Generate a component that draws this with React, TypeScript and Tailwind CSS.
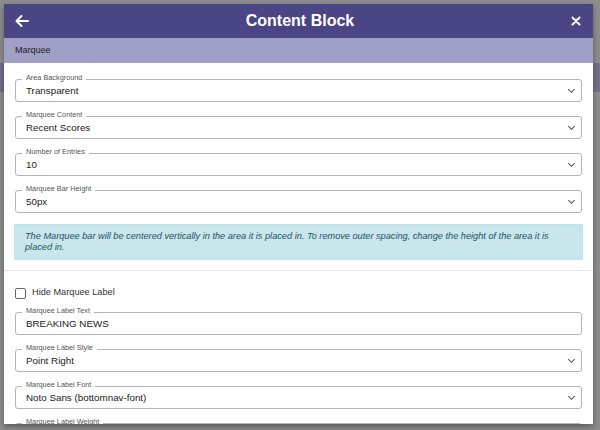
import React from "react";

type FieldProps = {
  label: string;
  value: string;
  select?: boolean;
};

const Chevron = () => (
  <svg width="9" height="9" viewBox="0 0 10 10" className="text-gray-600">
    <path d="M1.5 3.5 L5 7 L8.5 3.5" fill="none" stroke="currentColor" strokeWidth="1.2" />
  </svg>
);

const Field: React.FC<FieldProps> = ({ label, value, select = true }) => (
  <div className="relative shrink-0 h-[23px] border border-[#b5b5b5] rounded-[3px] bg-white flex items-center pl-[10px] pr-[5px]">
    <span className="absolute -top-[7px] left-[6px] px-[4px] bg-white text-[7.3px] leading-[10px] text-[#555]">
      {label}
    </span>
    <span className="flex-1 text-[9.8px] text-[#222] pt-[2px]">{value}</span>
    {select && <Chevron />}
  </div>
);

const App: React.FC = () => {
  return (
    <div
      className="w-[600px] h-[430px] bg-[linear-gradient(to_bottom,#8d8d8d_63px,#726f8c_63px,#726f8c_92px,#8d8d8d_92px)] overflow-hidden pt-[4px] pl-[4px]"
      style={{ fontFamily: "'Liberation Sans', Arial, sans-serif" }}
    >
      <div className="w-[589px] h-[420px] bg-white shadow-[0_3px_6px_rgba(0,0,0,0.35)] overflow-hidden flex flex-col">
        <div className="shrink-0 h-[34px] bg-[#4a4585] flex items-center justify-between pl-[10px] pr-[11px] text-white">
          <svg width="16" height="16" viewBox="0 0 16 16">
            <path d="M14 8 H2.5 M7.5 3 L2.5 8 L7.5 13" fill="none" stroke="white" strokeWidth="2" strokeLinecap="round" strokeLinejoin="round" />
          </svg>
          <h1 className="text-[16px] font-bold">Content Block</h1>
          <svg width="12" height="12" viewBox="0 0 12 12">
            <path d="M2.5 2.5 L9.5 9.5 M9.5 2.5 L2.5 9.5" fill="none" stroke="white" strokeWidth="2" strokeLinecap="round" />
          </svg>
        </div>
        <div className="shrink-0 h-[25px] bg-[#a09fc6] flex items-center pl-[11px] text-[9px] text-[#222]">
          Marquee
        </div>
        <div className="shrink-0 px-[11px] pt-[16px] flex flex-col gap-[14px]">
          <Field label="Area Background" value="Transparent" />
          <Field label="Marquee Content" value="Recent Scores" />
          <Field label="Number of Entries" value="10" />
          <Field label="Marquee Bar Height" value="50px" />
        </div>
        <div className="shrink-0 mx-[10px] mt-[11px] h-[36px] bg-[#c8e6ec] border border-[#bfe3ea] pl-[10px] pr-[20px] pt-[6px] text-[9.2px] leading-[11px] italic text-[#24535e]">
          The Marquee bar will be centered vertically in the area it is placed in. To remove outer spacing, change the height of the area it is placed in.
        </div>
        <div className="shrink-0 mt-[10px] border-t border-[#e6e6e6]" />
        <div className="shrink-0 h-[12px] mt-[16px] px-[11px] flex items-center gap-[6px]">
          <div className="w-[11px] h-[11px] border border-[#666] rounded-[2px]" />
          <span className="text-[9.2px] text-[#333]">Hide Marquee Label</span>
        </div>
        <div className="shrink-0 px-[11px] pt-[13px] flex flex-col gap-[14px]">
          <Field label="Marquee Label Text" value="BREAKING NEWS" select={false} />
          <Field label="Marquee Label Style" value="Point Right" />
          <Field label="Marquee Label Font" value="Noto Sans (bottomnav-font)" />
          <Field label="Marquee Label Weight" value="Normal" />
        </div>
      </div>
    </div>
  );
};

export default App;
